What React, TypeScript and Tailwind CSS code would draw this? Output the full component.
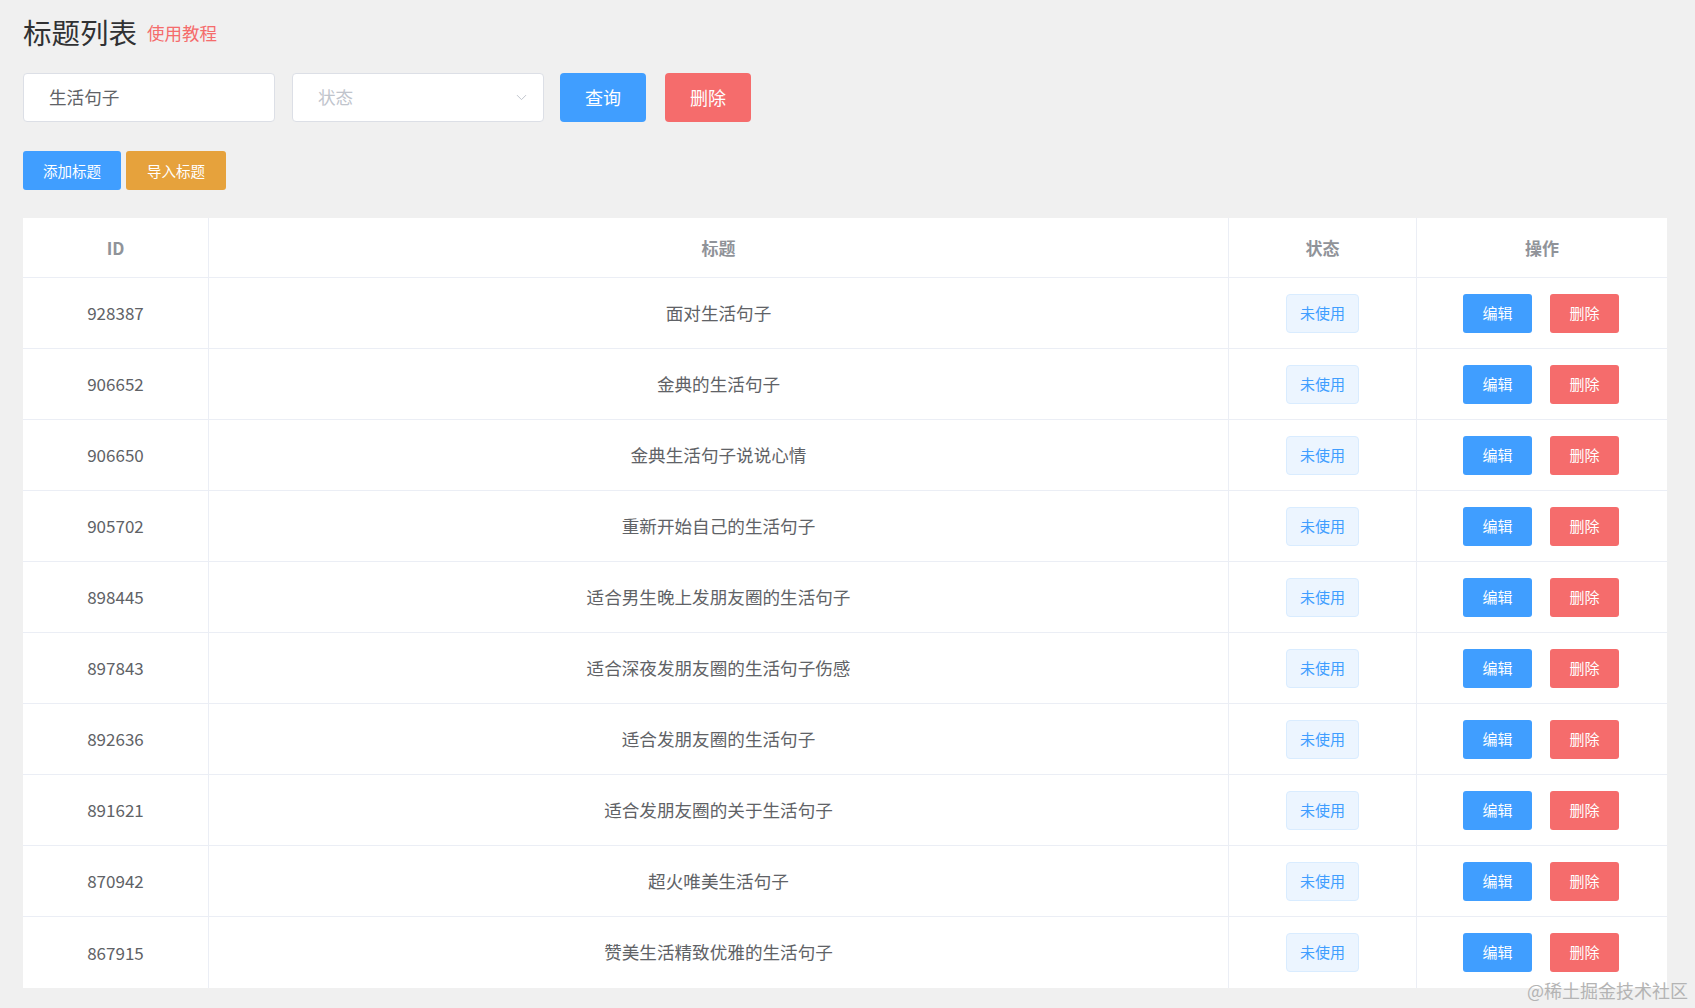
import React from 'react';
import { ChevronDown } from 'lucide-react';

interface TitleRow {
  id: number;
  title: string;
}

const rows: TitleRow[] = [
  { id: 928387, title: '面对生活句子' },
  { id: 906652, title: '金典的生活句子' },
  { id: 906650, title: '金典生活句子说说心情' },
  { id: 905702, title: '重新开始自己的生活句子' },
  { id: 898445, title: '适合男生晚上发朋友圈的生活句子' },
  { id: 897843, title: '适合深夜发朋友圈的生活句子伤感' },
  { id: 892636, title: '适合发朋友圈的生活句子' },
  { id: 891621, title: '适合发朋友圈的关于生活句子' },
  { id: 870942, title: '超火唯美生活句子' },
  { id: 867915, title: '赞美生活精致优雅的生活句子' },
];

const cols = 'grid grid-cols-[186px_1020px_188px_250px]';
const cell = 'flex items-center justify-center border-r border-b border-[#ebeef5]';

const App: React.FC = () => {
  return (
    <div className="min-h-screen bg-[#f0f0f0] pl-[23px] pt-[16px] font-['Noto_Sans_CJK_SC','Noto_Sans',sans-serif] relative">
      {/* title */}
      <div className="flex items-center h-[32px]">
        <h1 className="text-[28.5px] leading-[32px] text-[#303133] font-normal">标题列表</h1>
        <a className="ml-[10px] mt-[2px] text-[17.5px] leading-[24px] text-[#f56c6c]">使用教程</a>
      </div>

      {/* search bar */}
      <div className="flex items-center mt-[25px] h-[49px]">
        <div className="w-[252px] h-[49px] bg-white border border-[#dcdfe6] rounded-[4px] flex items-center pl-[25px] text-[17.6px] text-[#606266]">
          生活句子
        </div>
        <div className="ml-[17px] w-[252px] h-[49px] bg-white border border-[#dcdfe6] rounded-[4px] flex items-center justify-between pl-[25px] pr-[13px] text-[17.6px] text-[#c0c4cc]">
          <span>状态</span>
          <ChevronDown className="w-[17px] h-[17px] text-[#c0c4cc]" strokeWidth={1.4} />
        </div>
        <button className="ml-[16px] w-[86px] h-[49px] rounded-[4px] bg-[#409eff] text-white text-[18px]">查询</button>
        <button className="ml-[19px] w-[86px] h-[49px] rounded-[4px] bg-[#f56c6c] text-white text-[18px]">删除</button>
      </div>

      {/* actions */}
      <div className="flex items-center mt-[29px] gap-[5px]">
        <button className="w-[98px] h-[39px] rounded-[3px] bg-[#409eff] text-white text-[14.5px]">添加标题</button>
        <button className="w-[100px] h-[39px] rounded-[3px] bg-[#e6a23c] text-white text-[14.5px]">导入标题</button>
      </div>

      {/* table */}
      <div className="mt-[28px] w-[1644px] bg-white">
        <div className={`${cols} h-[60px] text-[17px] font-bold text-[#909399]`}>
          <div className={cell}>ID</div>
          <div className={cell}>标题</div>
          <div className={cell}>状态</div>
          <div className={`${cell} border-r-0`}>操作</div>
        </div>
        {rows.map((r, i) => {
          const last = i === rows.length - 1 ? 'border-b-0' : '';
          return (
            <div key={r.id} className={`${cols} h-[71px] text-[17.6px] text-[#606266]`}>
              <div className={`${cell} ${last} text-[17px]`}>{r.id}</div>
              <div className={`${cell} ${last}`}>{r.title}</div>
              <div className={`${cell} ${last}`}>
                <span className="w-[73px] h-[39px] flex items-center justify-center rounded-[4px] bg-[#ecf5ff] border border-[#d9ecff] text-[#409eff] text-[15px]">
                  未使用
                </span>
              </div>
              <div className={`${cell} border-r-0 ${last} gap-[18px] pr-[2px]`}>
                <button className="w-[69px] h-[39px] rounded-[3px] bg-[#409eff] text-white text-[15px]">编辑</button>
                <button className="w-[69px] h-[39px] rounded-[3px] bg-[#f56c6c] text-white text-[15px]">删除</button>
              </div>
            </div>
          );
        })}
      </div>

      {/* watermark */}
      <div className="absolute right-[7px] top-[979px] text-[18px] leading-[22px] text-[#b4b4b4]">
        @稀土掘金技术社区
      </div>
    </div>
  );
};

export default App;
